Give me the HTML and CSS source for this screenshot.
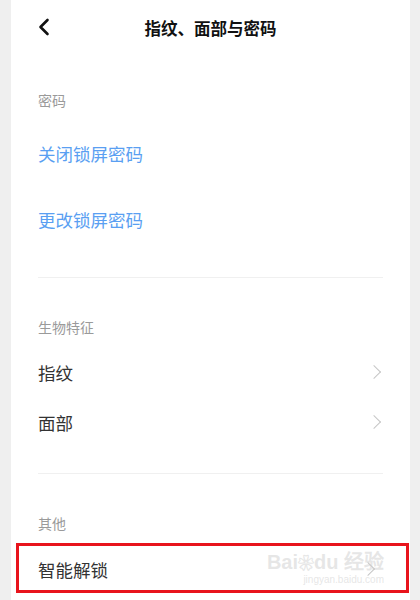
FILE: index.html
```html
<!DOCTYPE html>
<html lang="zh-CN">
<head>
    <meta charset="UTF-8">
    <meta name="viewport" content="width=device-width, initial-scale=1.0">
    <title>指纹、面部与密码</title>
    <link rel="stylesheet" href="styles.css">
</head>
<body>
    <div class="card">
        <div class="header">
            <svg class="back" width="14" height="18" viewBox="0 0 14 18">
                <path d="M10.5 2 L3.5 9 L10.5 16" fill="none" stroke="#111" stroke-width="2.6" stroke-linecap="round" stroke-linejoin="round"/>
            </svg>
            <h1 class="title">指纹、面部与密码</h1>
        </div>

        <div class="group first">
            <div class="label">密码</div>
            <div class="row tall link">关闭锁屏密码</div>
            <div class="row tall link">更改锁屏密码</div>
        </div>

        <div class="group mid">
            <div class="label">生物特征</div>
            <div class="row">指纹<span class="chev"></span></div>
            <div class="row">面部<span class="chev"></span></div>
        </div>

        <div class="group last">
            <div class="label">其他</div>
            <div class="row marked">智能解锁<span class="chev"></span>
                <div class="watermark">
                    <span class="wm-main">Bai<span class="paw">❀</span>du 经验</span>
                    <span class="wm-sub">jingyan.baidu.com</span>
                </div>
            </div>
        </div>
    </div>
</body>
</html>
```

FILE: styles.css
```css
body {
    margin: 0;
    background: #efefef;
    font-family: "Noto Sans CJK SC", "Noto Sans", sans-serif;
}

.card {
    margin: 0 10px 0 11px;
    height: 600px;
    background: #fff;
    padding: 0 27px;
    box-sizing: border-box;
}

.header {
    height: 57px;
    display: flex;
    align-items: center;
    justify-content: center;
    position: relative;
}

.back {
    position: absolute;
    left: -1px;
    top: 18px;
}

.title {
    margin: 0;
    font-size: 16.5px;
    font-weight: bold;
    color: #111;
    line-height: 20px;
    padding-bottom: 2px;
}

.group {
    padding: 39px 0 25px;
    border-bottom: 1px solid #f0f0f0;
}

.group.first {
    padding-top: 33px;
}

.group.mid {
    padding-bottom: 26px;
}

.group.last {
    border-bottom: none;
    padding-bottom: 0;
}

.label {
    font-size: 14px;
    line-height: 20px;
    color: #9a9a9a;
    margin-bottom: 10px;
}

.row {
    height: 50px;
    display: flex;
    align-items: center;
    justify-content: space-between;
    font-size: 17.5px;
    color: #333;
}

.row.tall {
    height: 66px;
}

.link {
    color: #5a9ff2;
}

.chev {
    width: 9px;
    height: 9px;
    border-top: 1.6px solid #c6c6c6;
    border-right: 1.6px solid #c6c6c6;
    transform: rotate(45deg);
    margin-right: 4px;
}

.row.marked {
    height: 42px;
    margin: 0 -26px 0 -22px;
    padding: 2px 29px 0 19px;
    border: 3px solid #e8141c;
    position: relative;
}

.watermark {
    position: absolute;
    right: 22px;
    top: 0;
    display: flex;
    flex-direction: column;
    align-items: flex-end;
    color: rgba(205, 205, 205, 0.5);
    line-height: 1;
}

.wm-main {
    font-family: "Liberation Sans", sans-serif;
    font-size: 20px;
    font-weight: bold;
    margin-top: 6px;
}

.paw {
    font-size: 16px;
}

.wm-sub {
    font-family: "Liberation Sans", sans-serif;
    font-size: 10px;
    margin-top: 3px;
}
```
